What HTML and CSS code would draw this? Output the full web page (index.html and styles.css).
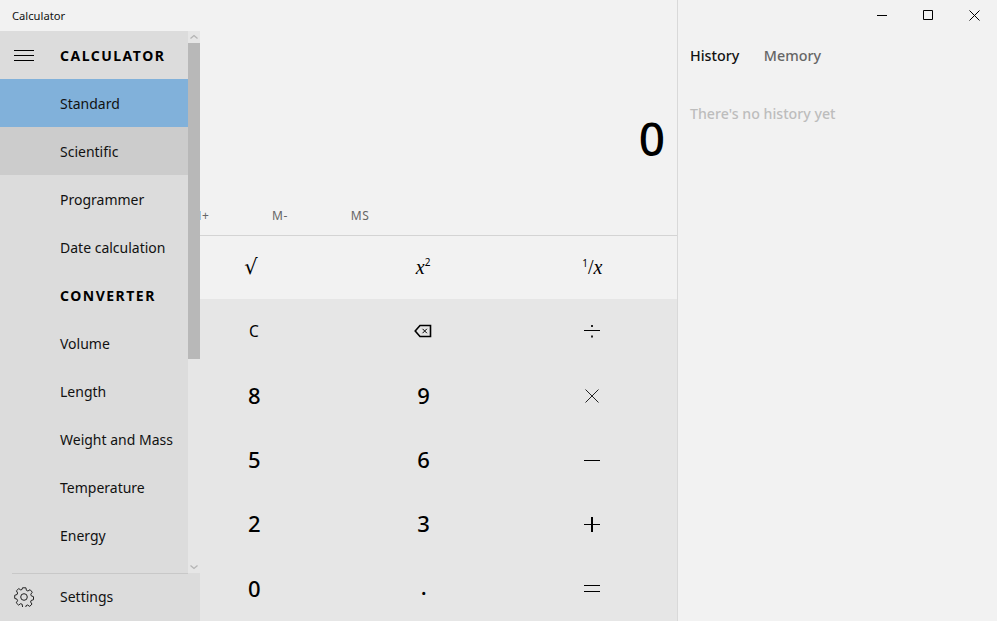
FILE: index.html
```html
<!DOCTYPE html>
<html lang="en">
<head>
<meta charset="utf-8">
<title>Calculator</title>
<link rel="stylesheet" href="styles.css">
</head>
<body>
<div class="window">
  <main class="calc">
    <header class="titlebar">Calculator</header>
    <div class="display"><span class="result">0</span></div>
    <div class="memory">
      <span class="mem"></span><span class="mem"></span><span class="mem">M+</span><span class="mem">M-</span><span class="mem">MS</span>
    </div>
    <div class="keys">
      <div class="key sci"></div>
      <div class="key sci root">√</div>
      <div class="key sci math">x<sup class="sq">2</sup></div>
      <div class="key sci math"><sup class="one">1</sup><span class="slash">/</span>x</div>
      <div class="key op"></div>
      <div class="key op small">C</div>
      <div class="key op">
        <svg class="ico" width="18" height="14" viewBox="0 0 18 14"><path d="M16.500 1.500H6L1.200 7 6 12.500h10.500z" fill="none" stroke="#000" stroke-width="1.600"/><path d="M8.500 4.800l4.400 4.400M12.900 4.800L8.500 9.200" fill="none" stroke="#000" stroke-width="1"/></svg>
      </div>
      <div class="key op">
        <svg class="ico" width="16" height="16" viewBox="0 0 16 16"><path d="M0 7.500h16" stroke="#000" fill="none"/><path d="M7 2h2v2H7zM7 12.500h2v2H7z" fill="#222"/></svg>
      </div>
      <div class="key num"></div><div class="key num">8</div><div class="key num">9</div>
      <div class="key op">
        <svg class="ico" width="16" height="16" viewBox="0 0 16 16"><path d="M1.500 1.500l13 13M14.500 1.500l-13 13" stroke="#222" fill="none"/></svg>
      </div>
      <div class="key num"></div><div class="key num">5</div><div class="key num">6</div>
      <div class="key op">
        <svg class="ico" width="16" height="16" viewBox="0 0 16 16"><path d="M0 8.500h16" stroke="#000" fill="none"/></svg>
      </div>
      <div class="key num"></div><div class="key num">2</div><div class="key num">3</div>
      <div class="key op">
        <svg class="ico" width="16" height="16" viewBox="0 0 16 16"><path d="M0 8.500h16" stroke="#000" fill="none"/><path d="M7 1h2v15H7z" fill="#000"/></svg>
      </div>
      <div class="key num"></div><div class="key num">0</div><div class="key num dot">.</div>
      <div class="key op">
        <svg class="ico" width="16" height="8" viewBox="0 0 16 8"><path d="M0 .5h16M0 6.500h16" stroke="#000" fill="none"/></svg>
      </div>
    </div>
  </main>

  <aside class="side">
    <div class="controls">
      <span class="ctl"><svg width="11" height="11" viewBox="0 0 11 11"><path d="M0 5.500h10" stroke="#000" fill="none"/></svg></span>
      <span class="ctl"><svg width="11" height="11" viewBox="0 0 11 11"><path d="M.5.5h9v9h-9z" stroke="#000" fill="none"/></svg></span>
      <span class="ctl"><svg width="11" height="11" viewBox="0 0 11 11"><path d="M.5.5l10 10M10.500.5l-10 10" stroke="#000" fill="none"/></svg></span>
    </div>
    <nav class="tabs"><span class="tab on">History</span><span class="tab">Memory</span></nav>
    <p class="empty">There's no history yet</p>
  </aside>

  <div class="flyout">
    <div class="fly-scroll">
      <div class="fly-list">
        <div class="row head">
          <svg class="burger" width="20" height="12" viewBox="0 0 20 12"><path d="M0 .5h20M0 5.500h20M0 10.500h20" stroke="#000" fill="none"/></svg>
          <span class="label heading">CALCULATOR</span>
        </div>
        <div class="row sel"><span class="label">Standard</span></div>
        <div class="row hov"><span class="label">Scientific</span></div>
        <div class="row"><span class="label">Programmer</span></div>
        <div class="row"><span class="label">Date calculation</span></div>
        <div class="row"><span class="label heading">CONVERTER</span></div>
        <div class="row"><span class="label">Volume</span></div>
        <div class="row"><span class="label">Length</span></div>
        <div class="row"><span class="label">Weight and Mass</span></div>
        <div class="row"><span class="label">Temperature</span></div>
        <div class="row"><span class="label">Energy</span></div>
      </div>
      <div class="bar">
        <svg class="arrow" width="12" height="12" viewBox="0 0 12 12"><path d="M2.500 7.500L6 4.500l3.500 3" stroke="#b4b4b4" stroke-width="1.300" fill="none"/></svg>
        <div class="thumb"></div>
        <svg class="arrow down" width="12" height="12" viewBox="0 0 12 12"><path d="M2.500 4.500L6 7.500l3.500-3" stroke="#b4b4b4" stroke-width="1.300" fill="none"/></svg>
      </div>
    </div>
    <div class="row settings">
      <svg class="gear" width="20" height="20" viewBox="0 0 20 20"><path d="M8.300 1h3.400l.5 2.500 1.500.7 2.200-1.300 2.200 2.500-1.500 2 .4 1.600 2.300.9v3l-2.400.8-.5 1.500 1.400 2.100-2.300 2.300-2.100-1.400-1.500.6-.5 2.400H8.500L8 17.500l-1.600-.6-2 1.400L2 16l1.400-2.100-.6-1.500L.5 11.600V8.500l2.400-.8.500-1.500L2.200 4l2.400-2.200 2 1.400 1.300-.6z" transform="translate(.2 -.2)" fill="none" stroke="#222"/><circle cx="10" cy="10" r="3.300" fill="none" stroke="#222"/></svg>
      <span class="label">Settings</span>
    </div>
  </div>
</div>
</body>
</html>
```
FILE: styles.css
```css
* { box-sizing: border-box; }
html, body { margin: 0; height: 100%; }
body { font-family: "Noto Sans", "Open Sans", sans-serif; color: #000; background: #f2f2f2; overflow: hidden; }
.window { position: relative; display: flex; width: 997px; height: 621px; background: #f2f2f2; overflow: hidden; }

.calc { width: 678px; height: 621px; display: flex; flex-direction: column; border-right: 1px solid #d9d9d9; }
.titlebar { height: 31px; padding: 8px 0 0 12px; font-size: 11.200px; line-height: 15px; color: #111; }
.display { height: 165px; display: flex; justify-content: flex-end; padding: 76px 12px 0 0; }
.result { font-size: 46px; line-height: 62px; font-weight: 500; color: #000; }
.memory { height: 40px; display: flex; border-bottom: 1px solid #d4d4d4; }
.mem { width: 80px; text-align: center; font-size: 12px; letter-spacing: .6px; line-height: 39px; color: #666; }

.keys { flex: 1; display: grid; grid-template-columns: repeat(4, 1fr); grid-template-rows: 63px repeat(5, 1fr); }
.key { display: flex; align-items: center; justify-content: center; background: #e6e6e6; font-size: 22px; font-weight: 500; }
.key.num { padding: 0 0 2px 1px; }
.key.num.dot { padding-bottom: 5px; }
.key.sci { background: #f2f2f2; font-size: 16px; font-weight: 400; }
.key.op { font-size: 14px; font-weight: 400; }
.key.op.small { font-size: 15.500px; }
.key.math { font-family: "Liberation Serif", serif; font-style: italic; font-size: 20px; }
.key.root { font-family: "DejaVu Sans", sans-serif; font-size: 21px; padding: 0 6px 2px 0; }
.sq { font-family: "Noto Sans", sans-serif; font-style: normal; font-size: 10px; line-height: 1; align-self: flex-start; margin-top: 21px; }
.one { font-family: "Noto Sans", sans-serif; font-style: normal; font-size: 10px; line-height: 1; align-self: flex-start; margin-top: 22px; }
.slash { font-style: normal; }
.ico { display: block; }

.side { flex: 1; display: flex; flex-direction: column; }
.controls { height: 31px; display: flex; justify-content: flex-end; }
.ctl { width: 46px; display: flex; align-items: center; justify-content: center; }
.tabs { display: flex; gap: 24.500px; height: 48px; padding-left: 12px; align-items: center; }
.tab { font-size: 14.300px; font-weight: 500; color: #666; }
.tab.on { color: #111; }
.empty { margin: 25px 0 0 12px; font-size: 14.200px; line-height: 20px; color: #bdbdbd; font-weight: 500; }

.flyout { position: absolute; left: 0; top: 31px; width: 200px; height: 590px; display: flex; flex-direction: column; background: #dcdcdc; }
.fly-scroll { flex: 1; display: flex; min-height: 0; }
.fly-list { width: 188px; }
.row { height: 48px; display: flex; align-items: center; padding-left: 60px; position: relative; }
.row .label { font-size: 14px; color: #111; }
.row .label.heading { font-size: 14px; font-weight: 700; letter-spacing: 1.500px; color: #000; }
.row.head { padding-left: 14px; }
.burger { margin: 2px 26px 0 0; flex: none; }
.row.sel { background: #81b1da; }
.row.hov { background: #cccccc; }
.bar { width: 12px; display: flex; flex-direction: column; background: #e6e6e6; }
.arrow { flex: none; background: #e6e6e6; }
.thumb { height: 316px; background: #b8b8b8; }
.arrow.down { margin-top: auto; }
.settings { padding-left: 14px; padding-bottom: 2px; }
.settings::before { content: ""; position: absolute; left: 12px; right: 12px; top: 0; height: 1px; background: #c8c8c8; }
.gear { margin: 2px 26px 0 0; flex: none; }
```
